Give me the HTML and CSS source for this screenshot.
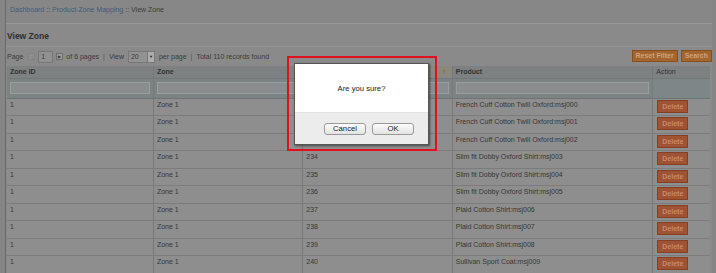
FILE: index.html
```html
<!DOCTYPE html>
<html lang="en">
<head>
    <meta charset="UTF-8">
    <title>View Zone</title>
    <link rel="stylesheet" href="styles.css">
</head>
<body>
    <div class="page">
        <div class="breadcrumb">
            <a href="#">Dashboard</a> :: <a href="#">Product-Zone Mapping</a> :: <span>View Zone</span>
        </div>
        <h1 class="page-title">View Zone</h1>

        <div class="toolbar">
            <div class="pager">
                Page
                <span class="arrow-box dim">&#9664;</span>
                <span class="page-input">1</span>
                <span class="arrow-box">&#9654;</span>
                of 6 pages
                <span class="sep">|</span>
                View
                <span class="select">20<span class="select-btn">&#9660;</span></span>
                per page
                <span class="sep">|</span>
                Total 110 records found
            </div>
            <div class="actions">
                <button class="btn">Reset Filter</button>
                <button class="btn">Search</button>
            </div>
        </div>

        <table class="grid">
            <colgroup>
                <col class="c-id">
                <col class="c-zone">
                <col class="c-pid">
                <col class="c-prod">
                <col class="c-act">
            </colgroup>
            <thead>
                <tr class="headings">
                    <th>Zone ID</th>
                    <th>Zone</th>
                    <th class="sorted">Product ID <span class="sort">&#8593;</span></th>
                    <th>Product</th>
                    <th class="act-head">Action</th>
                </tr>
                <tr class="filter">
                    <th><span class="filter-input"></span></th>
                    <th><span class="filter-input"></span></th>
                    <th><span class="filter-input"></span></th>
                    <th><span class="filter-input"></span></th>
                    <th class="filter-act"></th>
                </tr>
            </thead>
            <tbody>
                <tr><td>1</td><td>Zone 1</td><td>231</td><td>French Cuff Cotton Twill Oxford:msj000</td><td><button class="del">Delete</button></td></tr>
                <tr><td>1</td><td>Zone 1</td><td>232</td><td>French Cuff Cotton Twill Oxford:msj001</td><td><button class="del">Delete</button></td></tr>
                <tr><td>1</td><td>Zone 1</td><td>233</td><td>French Cuff Cotton Twill Oxford:msj002</td><td><button class="del">Delete</button></td></tr>
                <tr><td>1</td><td>Zone 1</td><td>234</td><td>Slim fit Dobby Oxford Shirt:msj003</td><td><button class="del">Delete</button></td></tr>
                <tr><td>1</td><td>Zone 1</td><td>235</td><td>Slim fit Dobby Oxford Shirt:msj004</td><td><button class="del">Delete</button></td></tr>
                <tr><td>1</td><td>Zone 1</td><td>236</td><td>Slim fit Dobby Oxford Shirt:msj005</td><td><button class="del">Delete</button></td></tr>
                <tr><td>1</td><td>Zone 1</td><td>237</td><td>Plaid Cotton Shirt:msj006</td><td><button class="del">Delete</button></td></tr>
                <tr><td>1</td><td>Zone 1</td><td>238</td><td>Plaid Cotton Shirt:msj007</td><td><button class="del">Delete</button></td></tr>
                <tr><td>1</td><td>Zone 1</td><td>239</td><td>Plaid Cotton Shirt:msj008</td><td><button class="del">Delete</button></td></tr>
                <tr><td>1</td><td>Zone 1</td><td>240</td><td>Sullivan Sport Coat:msj009</td><td><button class="del">Delete</button></td></tr>
            </tbody>
        </table>
    </div>

    <!-- confirm dialog, drawn over the dimmed page -->
    <div class="highlight">
        <div class="dialog">
            <div class="dialog-body">Are you sure?</div>
            <div class="dialog-foot">
                <button class="dlg-btn">Cancel</button>
                <button class="dlg-btn">OK</button>
            </div>
        </div>
    </div>
</body>
</html>
```

FILE: styles.css
```css
html, body {
    margin: 0;
    padding: 0;
}
body {
    background: #858585;
    font-family: "Liberation Sans", Arial, sans-serif;
    font-size: 7px;
    color: #333;
    width: 716px;
    height: 273px;
    overflow: hidden;
    position: relative;
}
.page {
    margin-left: 5px;
    width: 706px;
    height: 273px;
    border-left: 1px solid #6a6a6a;
    background: #8a8a8a;
}
.breadcrumb {
    height: 23px;
    line-height: 19px;
    padding-left: 4px;
    background: #878787;
    border-bottom: 1px solid #979797;
    color: #3c3c3c;
}
.breadcrumb a {
    color: #3e5d7a;
    text-decoration: none;
}
.page-title {
    margin: 0;
    height: 22px;
    line-height: 24px;
    padding-left: 1px;
    font-size: 8.5px;
    color: #2e2e2e;
    border-bottom: 1px solid #959595;
}
.toolbar {
    display: flex;
    justify-content: space-between;
    align-items: center;
    height: 19px;
    padding-left: 1px;
}
.pager {
    display: flex;
    align-items: center;
    gap: 2px;
    color: #3a3a3a;
}
.arrow-box {
    display: inline-block;
    width: 5px;
    height: 5px;
    border: 1px solid #6f6f6f;
    background: #999;
    font-size: 4px;
    line-height: 5px;
    text-align: center;
    color: #333;
    margin: 0 1px;
}
.arrow-box.dim {
    border-color: #838383;
    background: #8f8f8f;
    color: #888;
    margin-left: 3px;
}
.page-input {
    display: inline-block;
    width: 11px;
    height: 10px;
    line-height: 10px;
    padding-left: 2px;
    border: 1px solid #777;
    background: #919191;
}
.sep {
    margin: 0 2px;
    color: #555;
}
.select {
    position: relative;
    display: inline-block;
    width: 23px;
    height: 10px;
    line-height: 10px;
    padding-left: 2px;
    border: 1px solid #777;
    background: #929292;
    margin: 0 2px;
}
.select-btn {
    position: absolute;
    right: 0;
    top: 0;
    width: 6px;
    height: 10px;
    background: #adadad;
    border-left: 1px solid #777;
    font-size: 4px;
    text-align: center;
    color: #222;
}
.actions {
    display: flex;
    gap: 3px;
    margin-top: -1px;
}
.btn {
    font-family: inherit;
    font-size: 7px;
    font-weight: bold;
    color: #d0a37b;
    background: #a2652f;
    border: 1px solid #86501f;
    height: 12px;
    padding: 0 3px;
    line-height: 10px;
}
.grid {
    border-collapse: collapse;
    width: 703px;
    margin-left: 1px;
    table-layout: fixed;
}
.c-id { width: 146px; }
.c-zone { width: 149px; }
.c-pid { width: 149px; }
.c-prod { width: 200px; }
.c-act { width: 57px; }
.grid th, .grid td {
    padding: 0 3px;
    text-align: left;
    border-right: 1px solid #787878;
    box-sizing: border-box;
}
.headings th {
    height: 12px;
    background: #7d8181;
    font-weight: bold;
    color: #333;
    border-bottom: 1px solid #737777;
    line-height: 11px;
}
.headings th.sorted {
    background: #8c877d;
    position: relative;
}
.sort {
    position: absolute;
    right: 6px;
    top: 0;
    color: #8a4d19;
}
.headings th.act-head {
    font-weight: normal;
    border-right: none;
}
.filter th {
    height: 20px;
    background: #7b8383;
    padding: 0 3px;
    border-bottom: 1px solid #6e7474;
}
.filter th.filter-act {
    background: #7e8787;
    border-right: none;
}
.filter-input {
    display: block;
    height: 10px;
    border: 1px solid #999d9d;
    background: #8a8d8d;
}
.grid td {
    height: 17.5px;
    vertical-align: top;
    padding-top: 2px;
    background: #8e8e8e;
    border-bottom: 1px solid #7c7c7c;
    color: #363636;
    white-space: nowrap;
}
.grid td:last-child {
    border-right: none;
    padding: 1px 0 0 4px;
}
.del {
    display: block;
    font-family: inherit;
    font-size: 7px;
    font-weight: bold;
    width: 31px;
    height: 13px;
    padding: 0;
    color: #c68a6c;
    background: #9f5333;
    border: 1px solid #853f24;
}
.highlight {
    position: absolute;
    left: 287px;
    top: 56px;
    width: 146px;
    height: 91px;
    border: 2px solid #e0101e;
}
.dialog {
    margin: 5px 0 0 5px;
    width: 133px;
    height: 80px;
    border: 1px solid #555;
    background: #fff;
    box-shadow: 1px 1px 2px rgba(0, 0, 0, 0.5);
    display: flex;
    flex-direction: column;
}
.dialog-body {
    height: 48px;
    line-height: 50px;
    text-align: center;
    font-size: 7.7px;
    color: #222;
}
.dialog-foot {
    flex: 1;
    background: #ececec;
    border-top: 1px solid #e2e2e2;
    display: flex;
    justify-content: flex-end;
    align-items: center;
    gap: 6px;
    padding-right: 14px;
}
.dlg-btn {
    font-family: inherit;
    font-size: 7.7px;
    width: 42px;
    height: 12px;
    padding: 0;
    line-height: 10px;
    color: #222;
    border: 1px solid #999;
    border-radius: 3px;
    background: linear-gradient(#fdfdfd, #e2e2e2);
}
```
